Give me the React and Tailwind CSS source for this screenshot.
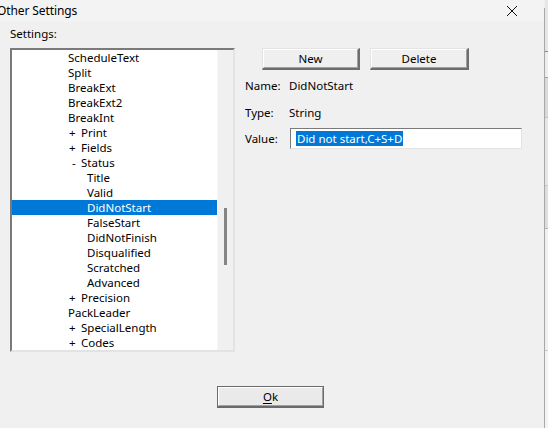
import React from "react";

const rows = [
  { t: "ScheduleText", l: 0 },
  { t: "Split", l: 0 },
  { t: "BreakExt", l: 0 },
  { t: "BreakExt2", l: 0 },
  { t: "BreakInt", l: 0 },
  { t: "Print", l: 0, s: "+" },
  { t: "Fields", l: 0, s: "+" },
  { t: "Status", l: 0, s: "-" },
  { t: "Title", l: 1 },
  { t: "Valid", l: 1 },
  { t: "DidNotStart", l: 1, sel: true },
  { t: "FalseStart", l: 1 },
  { t: "DidNotFinish", l: 1 },
  { t: "Disqualified", l: 1 },
  { t: "Scratched", l: 1 },
  { t: "Advanced", l: 1 },
  { t: "Precision", l: 0, s: "+" },
  { t: "PackLeader", l: 0 },
  { t: "SpecialLength", l: 0, s: "+" },
  { t: "Codes", l: 0, s: "+" },
];

function Row({ r }) {
  const base = "h-[15px] flex items-center whitespace-nowrap leading-none";
  if (r.l === 1) {
    return (
      <div className={base + (r.sel ? " bg-[#0078d7] text-white" : "")}>
        <span className="pl-[75px]">{r.t}</span>
      </div>
    );
  }
  if (r.s) {
    return (
      <div className={base}>
        <span className={r.s === "+" ? "w-[69px] pl-[57px]" : "w-[69px] pl-[60px]"}>{r.s}</span>
        <span>{r.t}</span>
      </div>
    );
  }
  return (
    <div className={base}>
      <span className="pl-[56px]">{r.t}</span>
    </div>
  );
}

function Btn({ children, w }) {
  return (
    <div
      className={`${w} h-[22px] flex items-center justify-center bg-[#e1e1e1] border-t border-l border-[#e3e3e3] border-b-2 border-r-2 border-b-[#6d6d6d] border-r-[#6d6d6d]`}
    >
      <div className="w-full h-full flex items-center justify-center border-t border-l border-white bg-[#efefef] border-b border-r border-b-[#a0a0a0] border-r-[#a0a0a0]">
        {children}
      </div>
    </div>
  );
}

export default function App() {
  return (
    <div
      className="w-[548px] h-[428px] bg-[#f0f0f0] overflow-hidden flex text-[11.5px] text-black"
      style={{ fontFamily: '"Noto Sans", "Open Sans", sans-serif' }}
    >
      <div className="w-[544px] h-full flex flex-col">
        {/* title bar */}
        <div className="h-[22px] bg-[#f3f3f3] flex items-center justify-between">
          <span className="-ml-[3px] text-[12px] tracking-[-0.1px]">Other Settings</span>
          <svg width="12" height="12" viewBox="0 0 12 12" className="mr-[26px]">
            <path d="M1 1 L11 11 M11 1 L1 11" stroke="#111" strokeWidth="1" fill="none" />
          </svg>
        </div>
        {/* label */}
        <div className="h-[26px] pl-[10px] flex items-center pb-[2px]">Settings:</div>
        {/* main */}
        <div className="flex pl-[10px] gap-[10px]">
          <div className="w-[225px] h-[304px] border-t-2 border-l-2 border-t-[#7a7a7a] border-l-[#7a7a7a] border-b-2 border-r-2 border-b-[#e3e3e3] border-r-[#e3e3e3] flex">
            <div className="w-[205px] bg-white overflow-hidden">
              {rows.map((r, i) => (
                <Row key={i} r={r} />
              ))}
            </div>
            <div className="w-[16px] bg-[#f0f0f0] flex justify-center border-l border-[#f7f7f7]">
              <div className="w-[3px] h-[57px] mt-[158px] bg-[#858585] ml-[-1px]"></div>
            </div>
          </div>
          <div className="flex flex-col">
            <div className="flex gap-[10px] pl-[17px]">
              <Btn w="w-[98px]">New</Btn>
              <Btn w="w-[99px]">Delete</Btn>
            </div>
            <div className="flex h-[16px] items-center mt-[8px]">
              <span className="w-[44px]">Name:</span>
              <span>DidNotStart</span>
            </div>
            <div className="flex h-[16px] items-center mt-[11px]">
              <span className="w-[44px]">Type:</span>
              <span>String</span>
            </div>
            <div className="flex items-center mt-[7px]">
              <span className="w-[45px]">Value:</span>
              <div className="w-[232px] h-[21px] bg-white border-t border-l border-[#7a7a7a] border-b border-r border-b-[#e3e3e3] border-r-[#e3e3e3] flex items-center pl-[5px]">
                <span className="bg-[#0078d7] text-white h-[15px] flex items-center px-[1px] leading-none">
                  Did not start,C+S+D
                </span>
              </div>
            </div>
          </div>
        </div>
        {/* ok */}
        <div className="pl-[217px] mt-[34px]">
          <div className="w-[107px] h-[22px] border border-[#6a6a6a] border-b-2 flex">
            <div className="flex-1 flex items-center justify-center bg-[#eaeaea] border-t border-l border-white border-b border-r border-b-[#a0a0a0] border-r-[#a0a0a0]">
              <span>
                <span className="underline underline-offset-2">O</span>k
              </span>
            </div>
          </div>
        </div>
      </div>
      {/* right edge background */}
      <div className="w-[1px] h-full bg-[#a8a8a8] mt-[8px]"></div>
      <div className="w-[3px] h-full bg-[#e6e6e6] flex flex-col">
        <div className="h-[51px]"></div>
        <div className="h-[1px] bg-[#8a8a8a]"></div>
        <div className="h-[25px] bg-[#ededed]"></div>
        <div className="h-[1px] bg-[#a0a0a0]"></div>
        <div className="h-[39px] bg-[#d9d9d9]"></div>
        <div className="h-[1px] bg-[#c0c0c0]"></div>
        <div className="h-[67px]"></div>
        <div className="h-[1px] bg-[#c8c8c8]"></div>
        <div className="h-[42px] bg-[#dedede]"></div>
        <div className="h-[1px] bg-[#b5b5b5]"></div>
        <div className="h-[121px] bg-[#f0f0f0]"></div>
        <div className="h-[1px] bg-[#c8c8c8]"></div>
        <div className="flex-1 bg-[#f3f3f3]"></div>
      </div>
    </div>
  );
}
